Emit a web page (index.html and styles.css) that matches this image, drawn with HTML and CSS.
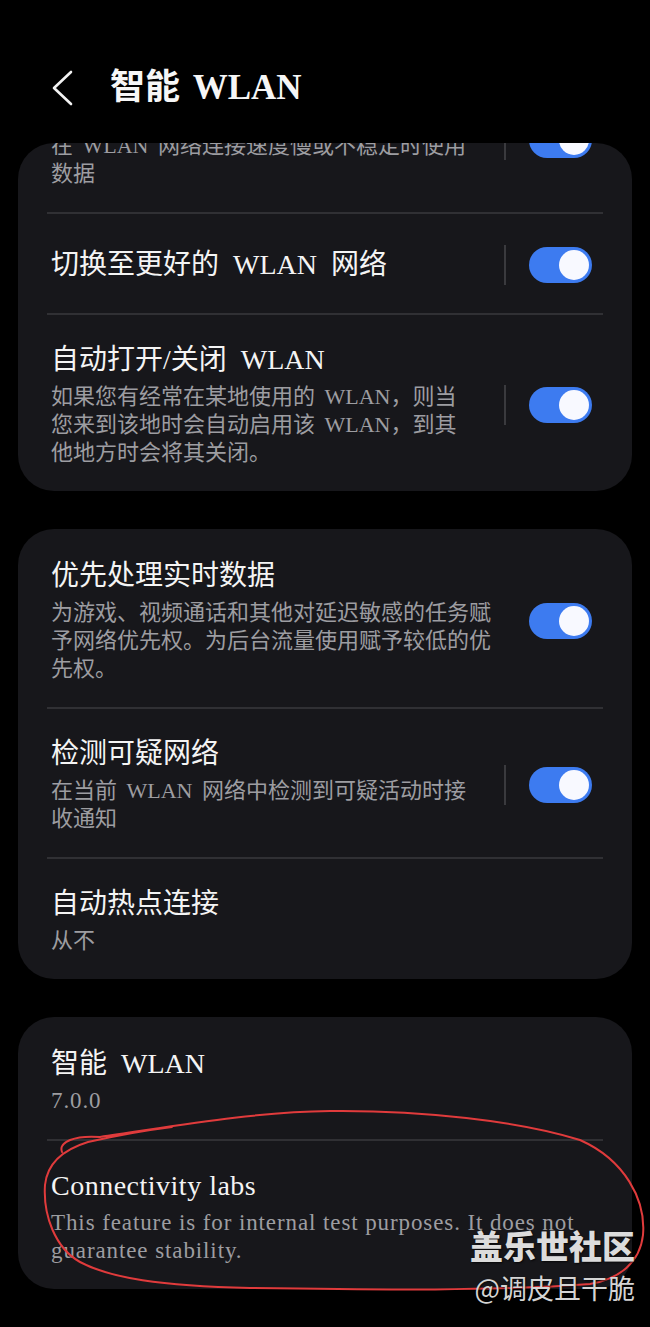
FILE: index.html
```html
<!DOCTYPE html>
<html lang="zh-CN">

<head>
    <meta charset="UTF-8">
    <meta name="viewport" content="width=device-width, initial-scale=1.0">
    <title>智能 WLAN</title>
    <link rel="stylesheet" href="styles.css">
</head>

<body>
    <div class="page">
        <div class="header">
            <svg class="back-icon" width="24" height="36" viewBox="0 0 24 36">
                <polyline points="21,2 4,18 21,34" fill="none" stroke="#f2f2f2" stroke-width="2.6" stroke-linecap="round" stroke-linejoin="round"/>
            </svg>
            <h1 class="page-title">智能 WLAN</h1>
        </div>

        <div class="list">
            <!-- first card is scrolled up under the header, its title is out of view -->
            <div class="card card-scrolled">
                <div class="item item-cut">
                    <div class="item-text">
                        <p class="item-sub">在 WLAN 网络连接速度慢或不稳定时使用<br>数据</p>
                    </div>
                    <span class="v-sep"></span>
                    <span class="switch"><span class="knob"></span></span>
                </div>
                <div class="item">
                    <div class="item-text">
                        <p class="item-title">切换至更好的 WLAN 网络</p>
                    </div>
                    <span class="v-sep"></span>
                    <span class="switch"><span class="knob"></span></span>
                </div>
                <div class="item">
                    <div class="item-text">
                        <p class="item-title">自动打开/关闭 WLAN</p>
                        <p class="item-sub">如果您有经常在某地使用的 WLAN，则当<br>您来到该地时会自动启用该 WLAN，到其<br>他地方时会将其关闭。</p>
                    </div>
                    <span class="v-sep"></span>
                    <span class="switch"><span class="knob"></span></span>
                </div>
            </div>

            <div class="card">
                <div class="item">
                    <div class="item-text">
                        <p class="item-title">优先处理实时数据</p>
                        <p class="item-sub">为游戏、视频通话和其他对延迟敏感的任务赋<br>予网络优先权。为后台流量使用赋予较低的优<br>先权。</p>
                    </div>
                    <span class="switch"><span class="knob"></span></span>
                </div>
                <div class="item">
                    <div class="item-text">
                        <p class="item-title">检测可疑网络</p>
                        <p class="item-sub">在当前 WLAN 网络中检测到可疑活动时接<br>收通知</p>
                    </div>
                    <span class="v-sep"></span>
                    <span class="switch"><span class="knob"></span></span>
                </div>
                <div class="item">
                    <div class="item-text">
                        <p class="item-title">自动热点连接</p>
                        <p class="item-sub">从不</p>
                    </div>
                </div>
            </div>

            <div class="card">
                <div class="item">
                    <div class="item-text">
                        <p class="item-title">智能 WLAN</p>
                        <p class="item-sub latin">7.0.0</p>
                    </div>
                </div>
                <div class="item">
                    <div class="item-text">
                        <p class="item-title latin-title">Connectivity labs</p>
                        <p class="item-sub latin">This feature is for internal test purposes. It does not<br>guarantee stability.</p>
                    </div>
                </div>
            </div>
        </div>

        <!-- hand drawn red loop on the screenshot -->
        <svg class="scribble" width="650" height="1327" viewBox="0 0 650 1327">
            <path d="M62 1152 C58 1142 75 1135 100 1137 C170 1127 250 1112 330 1111 C420 1110 520 1121 580 1140 C625 1160 646 1200 643 1235 C640 1262 620 1279 590 1284 C500 1291 380 1290 250 1288 C160 1286 110 1278 80 1262 C55 1248 43 1215 45 1185 C47 1165 62 1150 88 1142 C110 1137 140 1131 172 1127" fill="none" stroke="#e03b3c" stroke-width="2" stroke-linecap="round"/>
        </svg>

        <div class="watermark">
            <p class="wm-name">盖乐世社区</p>
            <p class="wm-user">@调皮且干脆</p>
        </div>
    </div>
</body>

</html>
```

FILE: styles.css
```css
body {
    margin: 0;
    background-color: black;
}

p, h1 {
    margin: 0;
}

.page {
    position: relative;
    width: 650px;
    height: 1327px;
    overflow: hidden;
    background-color: black;
    font-family: "Liberation Serif", "Noto Sans CJK SC", serif;
    color: #f4f4f4;
}

.header {
    display: flex;
    align-items: center;
    height: 56px;
    padding: 60px 0 27px 50px;
    gap: 36px;
}

.back-icon {
    display: block;
}

.page-title {
    font-size: 35px;
    font-weight: 700;
    line-height: 56px;
    word-spacing: 4px;
    color: #f6f6f6;
}

.list {
    display: flex;
    flex-direction: column;
    gap: 38px;
    margin: 0 18px;
    height: 1184px;
    overflow: hidden;
    border-radius: 36px 36px 0 0;
}

.card {
    background-color: #17171b;
    border-radius: 36px;
    padding: 0 29px;
}

.card-scrolled {
    margin-top: -81px;
}

.item {
    display: flex;
    align-items: center;
    box-sizing: border-box;
    min-height: 101px;
    padding: 27px 11px 24px 4px;
    border-top: 2px solid #303034;
}

.item:first-child {
    border-top: none;
    padding-top: 29px;
}

.item-text {
    flex: 1;
}

.item-title {
    font-size: 28px;
    line-height: 36px;
    word-spacing: 7px;
    color: #f4f4f4;
}

.latin-title {
    word-spacing: 0;
    letter-spacing: 0.5px;
}

.item-sub {
    margin-top: 5px;
    font-size: 22px;
    line-height: 28px;
    word-spacing: 4px;
    color: #9d9da1;
}

/* title of this row is scrolled out of view */
.item-cut .item-sub {
    margin-top: 41px;
}

.latin {
    font-size: 23px;
    word-spacing: 0;
    letter-spacing: 0.9px;
}

.v-sep {
    width: 2px;
    height: 40px;
    margin-right: 23px;
    background-color: #3a3a3e;
}

.switch {
    display: flex;
    justify-content: flex-end;
    align-items: center;
    box-sizing: border-box;
    width: 63px;
    height: 36px;
    padding: 3px;
    border-radius: 18px;
    background-color: #3d7bf0;
}

.knob {
    width: 30px;
    height: 30px;
    border-radius: 50%;
    background-color: #f8f9ff;
}

.scribble {
    position: absolute;
    top: 0;
    left: 0;
    pointer-events: none;
}

.watermark {
    position: absolute;
    right: 15px;
    top: 1222px;
    text-align: right;
    font-family: "Noto Sans CJK SC", sans-serif;
    text-shadow: 1px 1px 2px rgba(0, 0, 0, 0.7);
}

.wm-name {
    font-size: 33px;
    font-weight: 900;
    line-height: 46px;
    color: #dcdcdc;
}

.wm-user {
    font-size: 27px;
    line-height: 40px;
    color: #d4d4d4;
}
```
